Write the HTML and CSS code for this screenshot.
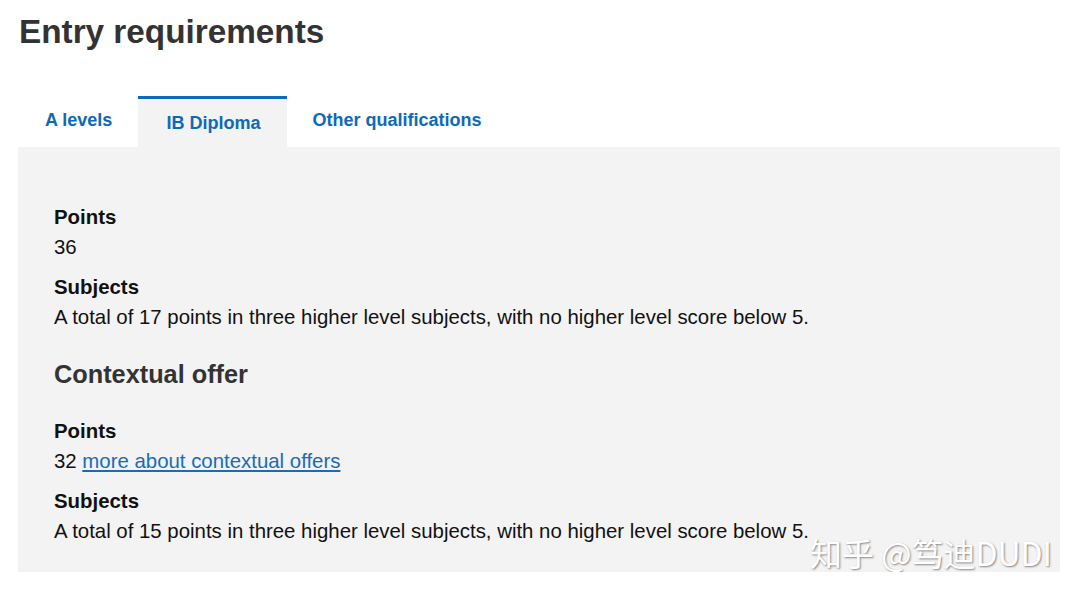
FILE: index.html
```html
<!DOCTYPE html>
<html lang="en">
<head>
  <meta charset="UTF-8">
  <meta name="viewport" content="width=device-width, initial-scale=1.0">
  <title>Entry requirements</title>
  <link rel="stylesheet" href="styles.css">
</head>
<body>

  <div class="page">
    <h1>Entry requirements</h1>

    <div class="tabs">
      <a class="tab" href="#">A levels</a>
      <a class="tab active" href="#">IB Diploma</a>
      <a class="tab other" href="#">Other qualifications</a>
    </div>

    <div class="panel">
      <dl>
        <dt>Points</dt>
        <dd>36</dd>
        <dt>Subjects</dt>
        <dd>A total of 17 points in three higher level subjects, with no higher level score below 5.</dd>
      </dl>

      <h2>Contextual offer</h2>

      <dl>
        <dt>Points</dt>
        <dd>32 <a href="#">more about contextual offers</a></dd>
        <dt>Subjects</dt>
        <dd>A total of 15 points in three higher level subjects, with no higher level score below 5.</dd>
      </dl>

      <div class="watermark">知乎 @笃迪DUDI</div>
    </div>
  </div>

</body>
</html>
```

FILE: styles.css
```css
body {
  font-family: "Liberation Sans", Arial, sans-serif;
  background-color: white;
  margin: 0;
  padding: 0;
  color: #111;
}

.page {
  padding: 0 20px 0 18px;
}

h1 {
  margin: 0;
  padding: 11px 0 0 1px;
  font-size: 33.3px;
  line-height: 42px;
  color: #333;
}

.tabs {
  display: flex;
  margin-top: 43px;
}

.tab {
  display: block;
  padding: 11px 26px 0 27px;
  height: 37px;
  font-size: 18px;
  font-weight: bold;
  color: #0e69b8;
  text-decoration: none;
  border-top: 3px solid transparent;
}

.tab.active {
  background-color: #f3f3f3;
  border-top-color: #0e69b8;
  padding: 14px 27px 0 28px;
  height: 34px;
}

.tab.other {
  padding-left: 25px;
}

.panel {
  position: relative;
  background-color: #f3f3f3;
  padding: 55px 36px 30px;
  height: 425px;
  box-sizing: border-box;
}

dl {
  margin: 0;
}

dt {
  font-weight: bold;
  font-size: 20.4px;
  line-height: 30px;
}

dd {
  margin: 0 0 10px;
  font-size: 20.4px;
  line-height: 30px;
}

dd a {
  color: #1a6bb8;
}

h2 {
  margin: 25px 0 25px;
  font-size: 25.3px;
  line-height: 34px;
  color: #333;
}

.watermark {
  position: absolute;
  right: 8px;
  bottom: 0;
  font-family: "Noto Sans CJK SC", sans-serif;
  font-size: 32px;
  line-height: 40px;
  color: white;
  text-shadow: 1px 1px 2px rgba(0, 0, 0, 0.45);
}
```
